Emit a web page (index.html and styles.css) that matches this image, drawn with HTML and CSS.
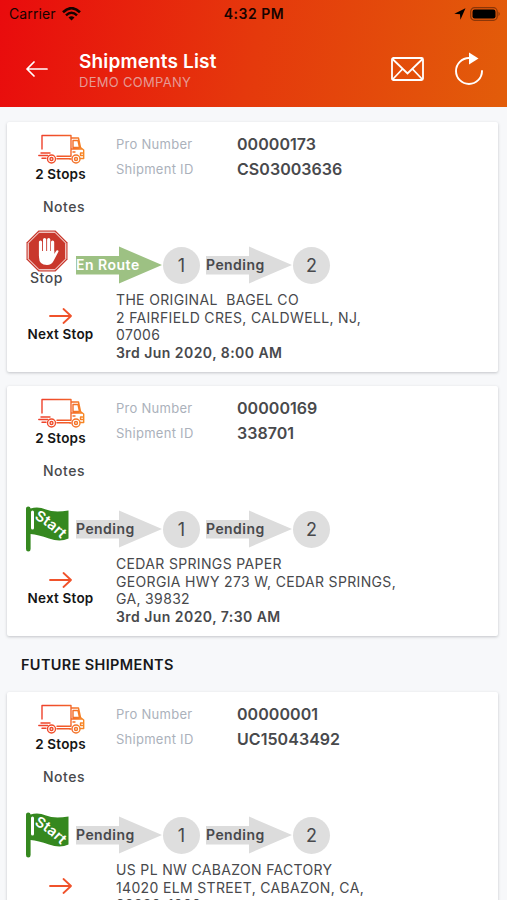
FILE: index.html
```html
<!DOCTYPE html>
<html lang="en">
<head>
<meta charset="utf-8">
<title>Shipments List</title>
<link rel="stylesheet" href="styles.css">
</head>
<body>
<svg class="defs" aria-hidden="true">
  <defs>
    <linearGradient id="warm" gradientUnits="userSpaceOnUse" x1="0" y1="0" x2="47" y2="0"><stop offset="0" stop-color="#ee3d2b"/><stop offset=".65" stop-color="#f2602a"/><stop offset="1" stop-color="#f78c25"/></linearGradient>
    <symbol id="truck" viewBox="0 0 47 30">
      <g fill="none" stroke="url(#warm)" stroke-width="1.4" stroke-linejoin="round" stroke-linecap="round">
        <path d="M4 15V1.500H33V22.300H19M33 4h7.500l2 9.500 3.200 2.500v8.500h-3.500M35 6.500h5l1.500 7H35zM33 15h11M35 18h2M44.500 19h-2v2.500h3M33 25h-1"/>
        <path d="M3 19h9M0.800 21.500h9M4 24.200h4M19 24.800h13"/>
        <circle cx="13.500" cy="25" r="4"/><circle cx="13.500" cy="25" r="1.500"/>
        <circle cx="38" cy="25" r="4"/><circle cx="38" cy="25" r="1.500"/>
      </g>
    </symbol>
    <symbol id="next" viewBox="0 0 24 16">
      <path d="M1 8H22M14.500 1L22 8L14.500 15" fill="none" stroke="#f0522b" stroke-width="1.800" stroke-linecap="round" stroke-linejoin="round"/>
    </symbol>
    <symbol id="arrow" viewBox="0 0 86 38">
      <path d="M0 10H43V0.500L86 19L43 37.500V28.500H0z" fill="currentColor"/>
    </symbol>
    <symbol id="flag" viewBox="0 0 44 46">
      <path d="M0 2.500Q0 .5 2.200 .5T4.600 2.500Q12 0 20 3.500T42.500 4.500V32.500Q34 36.500 23 32.500T4.600 28V43Q4.600 45.500 2.300 45.500T0 43z" fill="#35881f"/>
      <path d="M6.500 6V22" stroke="#fff" stroke-width="3" stroke-linecap="round"/>
      <path id="curve" d="M8 13C15 16 24 22 38 36" fill="none"/>
      <text class="flag-text"><textPath href="#curve">Start</textPath></text>
    </symbol>
  </defs>
</svg>

<header class="header">
  <div class="status">
    <div class="carrier">Carrier
      <svg width="19" height="14" viewBox="0 0 19 14"><path d="M1 5.200Q9.500-2.800 18 5.200" fill="none" stroke="#160300" stroke-width="2.600"/><path d="M4 8.400Q9.500 3.200 15 8.400" fill="none" stroke="#160300" stroke-width="2.500"/><path d="M6.500 10.600Q9.500 8 12.500 10.600L9.500 13.600z" fill="#160300"/></svg>
    </div>
    <div class="time">4:32 PM</div>
    <div class="power">
      <svg width="12" height="12" viewBox="0 0 12 12"><path d="M11.500 .3L.3 5.800L6 6.200L6.400 11.700z"/></svg>
      <svg width="31" height="14" viewBox="0 0 31 14"><rect x=".7" y=".7" width="26.500" height="12.600" rx="3.800" fill="none" stroke="#8b3608" stroke-width="1.200"/><rect x="2.500" y="2.500" width="23" height="9" rx="2.200"/><path d="M28.500 4.800Q31 7 28.500 9.200z" fill="#8b3608"/></svg>
    </div>
  </div>
  <div class="nav">
    <svg class="back" width="22" height="16" viewBox="0 0 22 16"><path d="M21 8H1M8 1L1 8L8 15" fill="none" stroke="#fff" stroke-width="1.700" stroke-linecap="round" stroke-linejoin="round"/></svg>
    <div class="titles">
      <h1>Shipments List</h1>
      <p>DEMO COMPANY</p>
    </div>
    <svg class="mail" width="33" height="24" viewBox="0 0 33 24"><g fill="none" stroke="#fff" stroke-width="1.800"><rect x="1" y="1" width="31" height="22" rx="1.500"/><path d="M1.500 2L16.500 16.500L31.500 2M1.500 22.500L11.500 12M31.500 22.500L21.500 12"/></g></svg>
    <svg width="30" height="34" viewBox="0 0 30 34"><path d="M15 6A13 13 0 1 0 28 19" fill="none" stroke="#fff" stroke-width="1.900" stroke-linecap="round"/><path d="M15 .500L24.500 6.500L15 12.500z" fill="#fff"/></svg>
  </div>
</header>

<main>
  <section class="card">
    <div class="top">
      <div class="side"><svg class="truck"><use href="#truck"/></svg><b>2 Stops</b></div>
      <dl><dt>Pro Number</dt><dd>00000173</dd><dt>Shipment ID</dt><dd>CS03003636</dd></dl>
    </div>
    <div class="notes">Notes</div>
    <div class="track">
      <div class="action">
        <svg class="halt" width="42" height="42" viewBox="0 0 42 42"><path d="M12.500 .500H29.500L41.500 12.500V29.500L29.500 41.500H12.500L.5 29.500V12.500z" fill="#c9382c"/><path d="M13.200 2.200H28.800L39.800 13.200V28.800L28.800 39.800H13.200L2.200 28.800V13.200z" fill="none" stroke="#fff" stroke-width="1"/><path d="M14.500 12V26M18.600 9.500V24M22.700 9.500V24M26.600 12V27" stroke="#fff" stroke-width="3.200" stroke-linecap="round"/><path d="M13 21H28.200V24L30.500 20.500Q32.500 19.500 32.500 21.500L27.500 31Q25.500 35 21 35Q13 35 13 27z" fill="#fff"/></svg>
        <span>Stop</span>
      </div>
      <div class="leg route"><svg><use href="#arrow"/></svg><span>En Route</span></div>
      <div class="num">1</div>
      <div class="leg"><svg><use href="#arrow"/></svg><span>Pending</span></div>
      <div class="num">2</div>
    </div>
    <div class="bottom">
      <div class="side"><svg class="next"><use href="#next"/></svg><b>Next Stop</b></div>
      <address>THE ORIGINAL&nbsp; BAGEL CO<br>2 FAIRFIELD CRES, CALDWELL, NJ,<br>07006<br><b>3rd Jun 2020, 8:00 AM</b></address>
    </div>
  </section>

  <section class="card">
    <div class="top">
      <div class="side"><svg class="truck"><use href="#truck"/></svg><b>2 Stops</b></div>
      <dl><dt>Pro Number</dt><dd>00000169</dd><dt>Shipment ID</dt><dd>338701</dd></dl>
    </div>
    <div class="notes">Notes</div>
    <div class="track">
      <div class="action"><svg class="flag"><use href="#flag"/></svg></div>
      <div class="leg"><svg><use href="#arrow"/></svg><span>Pending</span></div>
      <div class="num">1</div>
      <div class="leg"><svg><use href="#arrow"/></svg><span>Pending</span></div>
      <div class="num">2</div>
    </div>
    <div class="bottom">
      <div class="side"><svg class="next"><use href="#next"/></svg><b>Next Stop</b></div>
      <address>CEDAR SPRINGS PAPER<br>GEORGIA HWY 273 W, CEDAR SPRINGS,<br>GA, 39832<br><b>3rd Jun 2020, 7:30 AM</b></address>
    </div>
  </section>

  <h2>FUTURE SHIPMENTS</h2>

  <section class="card">
    <div class="top">
      <div class="side"><svg class="truck"><use href="#truck"/></svg><b>2 Stops</b></div>
      <dl><dt>Pro Number</dt><dd>00000001</dd><dt>Shipment ID</dt><dd>UC15043492</dd></dl>
    </div>
    <div class="notes">Notes</div>
    <div class="track">
      <div class="action"><svg class="flag"><use href="#flag"/></svg></div>
      <div class="leg"><svg><use href="#arrow"/></svg><span>Pending</span></div>
      <div class="num">1</div>
      <div class="leg"><svg><use href="#arrow"/></svg><span>Pending</span></div>
      <div class="num">2</div>
    </div>
    <div class="bottom">
      <div class="side"><svg class="next"><use href="#next"/></svg></div>
      <address>US PL NW CABAZON FACTORY<br>14020 ELM STREET, CABAZON, CA,<br>92230-1000</address>
    </div>
  </section>
</main>
</body>
</html>
```
FILE: styles.css
```css
* { box-sizing: border-box; margin: 0; padding: 0; }
html, body { height: 900px; overflow: hidden; }
body {
  background: #f7f8fa;
  color: #48494c;
  font-family: Inter, "Liberation Sans", sans-serif;
  font-size: 14px;
}
svg { display: block; flex: none; }
.defs { position: absolute; width: 0; height: 0; }

.header { height: 107px; background: linear-gradient(100deg, #e90b0d 0%, #e5390c 50%, #e25d0a 100%); }
.status {
  display: grid;
  grid-template-columns: 1fr auto 1fr;
  align-items: center;
  height: 27px;
  padding: 0 8px 0 9px;
  color: #160300;
}
.carrier { display: flex; align-items: center; gap: 6px; font-size: 14px; letter-spacing: 0.1px; }
.time { font-size: 14px; font-weight: 600; letter-spacing: 0.5px; }
.power { display: flex; align-items: center; justify-content: flex-end; gap: 4px; }
.power svg:last-child { margin-right: -2px; }
.nav { display: flex; align-items: center; height: 80px; padding: 3px 23px 0 26px; }
.titles { flex: 1; margin-left: 31px; padding-top: 2px; }
.titles h1 { font-size: 19px; line-height: 24px; font-weight: 600; color: #fff; letter-spacing: 0.15px; }
.titles p { font-size: 13px; line-height: 16px; color: #e59a94; letter-spacing: 0.3px; }
.mail { margin-right: 30px; }

main { display: flex; flex-direction: column; gap: 14px; padding: 15px 9px 0 7px; }
.card { height: 250px; flex: none; background: #fff; border-radius: 2px; box-shadow: 0 1px 3px rgba(60, 65, 75, 0.28); }
h2 { height: 28px; padding: 1px 0 0 14px; line-height: 28px; font-size: 14.5px; font-weight: 600; color: #17181a; letter-spacing: 0.35px; }

.side { width: 107px; flex: none; display: flex; flex-direction: column; align-items: center; margin-right: 2px; }
.side b { font-size: 13.5px; line-height: 19px; font-weight: 600; color: #151515; letter-spacing: 0.2px; }
.top { display: flex; height: 74px; padding-top: 12px; }
.truck { width: 47px; height: 30px; margin-left: 1px; margin-bottom: 1px; }
dl { display: grid; grid-template-columns: 121px auto; grid-auto-rows: 25px; margin-top: -3px; align-items: center; height: 50px; }
dt { font-size: 13px; color: #abb1bb; letter-spacing: 0.27px; }
dd { font-size: 16px; font-weight: 600; letter-spacing: 0.05px; }
.notes { height: 22px; width: 114px; text-align: center; line-height: 22px; font-weight: 500; letter-spacing: 0.5px; }
.track { display: flex; align-items: center; height: 73px; padding: 21px 0 0 19px; }
.action { width: 50px; height: 62px; flex: none; }
.action span { display: block; width: 41px; margin-top: -2px; text-align: center; line-height: 15px; font-weight: 500; letter-spacing: 0.6px; }
.halt { margin-top: -4px; }
.flag { width: 44px; height: 46px; margin-top: 8px; }
.flag-text { fill: #fff; font: 600 14.5px Inter, sans-serif; }
.leg { width: 86px; height: 38px; flex: none; display: grid; align-items: center; color: #dcdcdc; }
.leg svg { grid-area: 1 / 1; width: 86px; height: 38px; }
.leg span { grid-area: 1 / 1; z-index: 1; padding-bottom: 2px; color: #48494c; font-weight: 600; letter-spacing: 0.45px; }
.leg.route { color: #9dc183; }
.leg.route span { color: #fff; letter-spacing: 0.5px; }
.num { width: 37px; height: 37px; flex: none; border-radius: 50%; background: #dedede; display: flex; align-items: center; justify-content: center; font-size: 18px; margin: 0 6px 0 1px; }
.bottom { display: flex; }
.bottom .side { padding-top: 17px; }
.next { width: 24px; height: 16px; margin-bottom: 1px; }
address { font-style: normal; font-size: 14px; line-height: 17.600px; letter-spacing: 0.34px; }
address b { font-weight: 600; letter-spacing: 0.45px; }
```
